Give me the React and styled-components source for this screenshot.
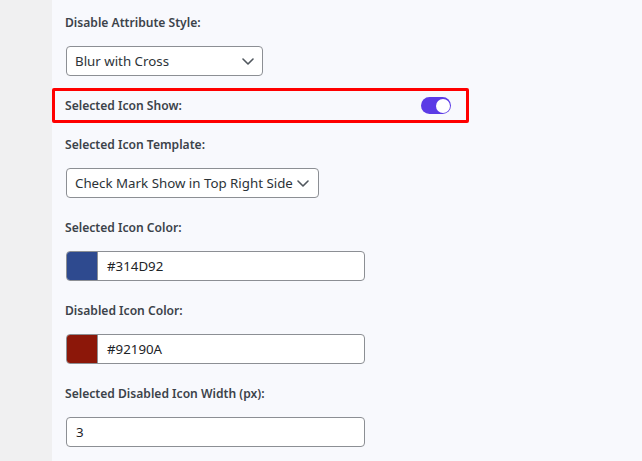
import React from "react";
import styled, { createGlobalStyle } from "styled-components";

const Global = createGlobalStyle`
  html, body { margin: 0; padding: 0; }
  body { font-family: "Noto Sans", "Open Sans", sans-serif; }
  * { box-sizing: border-box; }
`;

const Page = styled.div`
  display: flex;
  min-height: 100vh;
  background: #f8f9fd;
`;

const Sidebar = styled.aside`
  width: 52px;
  flex-shrink: 0;
  background: #f0f0f1;
`;

const Content = styled.main`
  flex: 1;
  display: flex;
  flex-direction: column;
  align-items: flex-start;
  padding-top: 13px;
`;

const Field = styled.div`
  display: flex;
  flex-direction: column;
  align-items: flex-start;
  padding-left: 13px;
  margin-bottom: ${(p) => (p.$tight ? 12 : 20)}px;
`;

const Label = styled.label`
  font-size: 12.1px;
  font-weight: 600;
  line-height: 20px;
  color: #3c434a;
  margin-bottom: 13px;
  white-space: nowrap;
`;

const ToggleRow = styled.div`
  width: 417px;
  height: 35px;
  border: 3px solid #ff0000;
  border-radius: 2px;
  padding: 0 15px 0 10px;
  display: flex;
  align-items: center;
  justify-content: space-between;
  margin-bottom: 12px;
  ${Label} { margin-bottom: 0; }
`;

const Switch = styled.span`
  width: 30px;
  height: 17px;
  border-radius: 9px;
  background: ${(p) => (p.$on ? "#5b3be6" : "#c3c4c7")};
  display: flex;
  align-items: center;
  justify-content: ${(p) => (p.$on ? "flex-end" : "flex-start")};
  padding: 0 1.5px;
`;

const Knob = styled.span`
  width: 14px;
  height: 14px;
  border-radius: 50%;
  background: #fff;
`;

const SelectBox = styled.div`
  position: relative;
  margin-left: 1px;
  width: ${(p) => p.$w}px;
  height: 30px;
  background: #fff;
  border: 1px solid #8c8f94;
  border-radius: 4px;
  display: flex;
  align-items: center;
  padding: 0 26px 0 8px;
  font-size: 13.3px;
  color: #2c3338;
  white-space: nowrap;
  overflow: hidden;
`;

const Chevron = styled.svg`
  position: absolute;
  right: ${(p) => p.$r}px;
  top: 50%;
  margin-top: -3px;
`;

const ColorBox = styled.div`
  margin-left: 1px;
  width: 299px;
  height: 30px;
  background: #fff;
  border: 1px solid #8c8f94;
  border-radius: 4px;
  display: flex;
  align-items: stretch;
  overflow: hidden;
`;

const Swatch = styled.span`
  width: 31px;
  flex-shrink: 0;
  background: ${(p) => p.$c};
  border-right: 1px solid #8c8f94;
`;

const TextValue = styled.span`
  display: flex;
  align-items: center;
  padding-left: ${(p) => p.$pl}px;
  font-size: 13.3px;
  color: #1d2327;
`;

const TextBox = styled.div`
  margin-left: 1px;
  width: 299px;
  height: 30px;
  background: #fff;
  border: 1px solid #8c8f94;
  border-radius: 4px;
  display: flex;
  align-items: stretch;
`;

function Select({ value, width, chevRight }) {
  return (
    <SelectBox $w={width}>
      {value}
      <Chevron $r={chevRight} width="12" height="7" viewBox="0 0 12 7">
        <path d="M1 1l5 5 5-5" fill="none" stroke="#50575e" strokeWidth="1.6" strokeLinecap="round" strokeLinejoin="round" />
      </Chevron>
    </SelectBox>
  );
}

export default function App() {
  return (
    <>
      <Global />
      <Page>
        <Sidebar />
        <Content>
          <Field $tight>
            <Label>Disable Attribute Style:</Label>
            <Select value="Blur with Cross" width={197} chevRight={8} />
          </Field>
          <ToggleRow>
            <Label>Selected Icon Show:</Label>
            <Switch $on>
              <Knob />
            </Switch>
          </ToggleRow>
          <Field>
            <Label>Selected Icon Template:</Label>
            <Select value="Check Mark Show in Top Right Side" width={253} chevRight={9} />
          </Field>
          <Field>
            <Label>Selected Icon Color:</Label>
            <ColorBox>
              <Swatch $c="#2e4a8f" />
              <TextValue $pl={9}>#314D92</TextValue>
            </ColorBox>
          </Field>
          <Field>
            <Label>Disabled Icon Color:</Label>
            <ColorBox>
              <Swatch $c="#8c1709" />
              <TextValue $pl={9}>#92190A</TextValue>
            </ColorBox>
          </Field>
          <Field>
            <Label>Selected Disabled Icon Width (px):</Label>
            <TextBox>
              <TextValue $pl={9}>3</TextValue>
            </TextBox>
          </Field>
        </Content>
      </Page>
    </>
  );
}
